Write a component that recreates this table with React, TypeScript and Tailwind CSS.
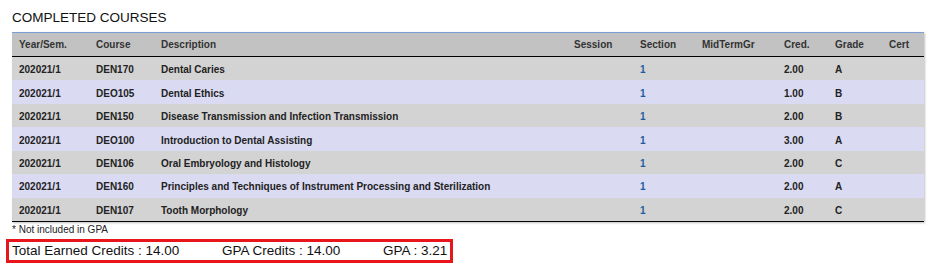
import React from 'react';

const courses = [
  { year: '202021/1', course: 'DEN170', desc: 'Dental Caries', section: '1', cred: '2.00', grade: 'A' },
  { year: '202021/1', course: 'DEO105', desc: 'Dental Ethics', section: '1', cred: '1.00', grade: 'B' },
  { year: '202021/1', course: 'DEN150', desc: 'Disease Transmission and Infection Transmission', section: '1', cred: '2.00', grade: 'B' },
  { year: '202021/1', course: 'DEO100', desc: 'Introduction to Dental Assisting', section: '1', cred: '3.00', grade: 'A' },
  { year: '202021/1', course: 'DEN106', desc: 'Oral Embryology and Histology', section: '1', cred: '2.00', grade: 'C' },
  { year: '202021/1', course: 'DEN160', desc: 'Principles and Techniques of Instrument Processing and Sterilization', section: '1', cred: '2.00', grade: 'A' },
  { year: '202021/1', course: 'DEN107', desc: 'Tooth Morphology', section: '1', cred: '2.00', grade: 'C' },
];

const cols = 'grid grid-cols-[77px_65px_413px_66px_62px_82px_51px_54px_1fr] items-center pl-[7px]';

export default function App() {
  return (
    <div className="w-[936px] h-[272px] bg-white font-['Liberation_Sans',Arial,sans-serif] text-[#222]">
      <div className="pl-3 pt-[10px] text-[13.5px] leading-[16px] text-[#111]">COMPLETED COURSES</div>

      <div className="ml-3 mt-[6px] w-[912px] border-t border-[#7a9fd4] shadow-[1px_1px_2px_rgba(0,0,0,0.25)]">
        <div className={`${cols} h-[24px] bg-[#c2c2c2] border-b border-black text-[10px] font-bold text-[#333]`}>
          <span>Year/Sem.</span>
          <span>Course</span>
          <span>Description</span>
          <span>Session</span>
          <span>Section</span>
          <span>MidTermGr</span>
          <span>Cred.</span>
          <span>Grade</span>
          <span>Cert</span>
        </div>
        {courses.map((c, i) => (
          <div
            key={i}
            className={`${cols} h-[23.45px] pt-[2px] text-[10px] font-bold text-[#222] ${i % 2 === 0 ? 'bg-[#d3d3d3]' : 'bg-[#dadaf2]'}`}
          >
            <span>{c.year}</span>
            <span>{c.course}</span>
            <span>{c.desc}</span>
            <span></span>
            <span className="text-[#1d5d9e]">{c.section}</span>
            <span></span>
            <span>{c.cred}</span>
            <span>{c.grade}</span>
            <span></span>
          </div>
        ))}
        <div className="h-px bg-black" />
      </div>

      <div className="pl-3 pt-[1px] text-[10px] leading-[13px] text-[#222]">* Not included in GPA</div>

      <div className="ml-[6px] mt-[3px] w-[447px] h-[24px] border-[3px] border-[#e8151b] flex items-center pl-[3px] text-[13.5px] text-[#111]">
        <span className="w-[210px]">Total Earned Credits : 14.00</span>
        <span className="w-[161px]">GPA Credits : 14.00</span>
        <span>GPA : 3.21</span>
      </div>
    </div>
  );
}
